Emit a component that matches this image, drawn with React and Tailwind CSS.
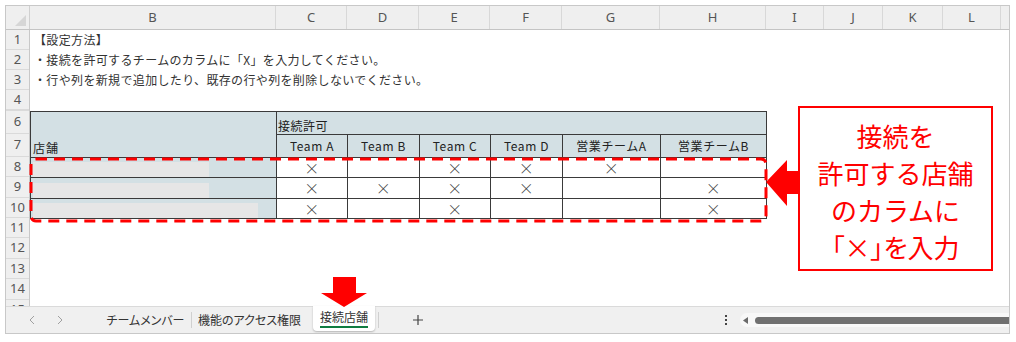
import React from 'react';

const jp = "font-['Noto_Sans_CJK_JP','Noto_Sans',sans-serif]";

const colHeads = [
  { k: 'B', w: 'w-[246px]' },
  { k: 'C', w: 'w-[71px]' },
  { k: 'D', w: 'w-[72px]' },
  { k: 'E', w: 'w-[71px]' },
  { k: 'F', w: 'w-[72px]' },
  { k: 'G', w: 'w-[98px]' },
  { k: 'H', w: 'w-[106px]' },
  { k: 'I', w: 'w-[58px]' },
  { k: 'J', w: 'w-[59px]' },
  { k: 'K', w: 'w-[60px]' },
  { k: 'L', w: 'w-[58px]' },
];

const rowHeads = [
  ['1', 'h-[20px]'], ['2', 'h-[20px]'], ['3', 'h-[20px]'], ['4', 'h-[20px]'], ['', 'h-[1px]'],
  ['6', 'h-[23px]'], ['7', 'h-[23px]'], ['8', 'h-[20px]'], ['9', 'h-[21px]'], ['10', 'h-[20px]'],
  ['11', 'h-[20px]'], ['12', 'h-[21px]'], ['13', 'h-[20px]'], ['14', 'h-[21px]'], ['15', 'h-[20px]'],
];

const teams = ['Team A', 'Team B', 'Team C', 'Team D', '営業チームA', '営業チームB'];

// store rows: mask width + allowed teams
const stores = [
  { mask: 'w-[176px]', h: 'h-[20px]', marks: [1, 0, 1, 1, 1, 0] },
  { mask: 'w-[176px]', h: 'h-[21px]', marks: [1, 1, 1, 1, 0, 1] },
  { mask: 'w-[225px]', h: 'h-[20px]', marks: [1, 0, 1, 0, 0, 1] },
];

const cell = 'border border-[#3a3a3a] p-0';

const PermissionTable = () => (
  <table className={`table-fixed border-collapse w-[736px] ${jp} text-[12px] text-[#222]`}>
    <colgroup>
      <col className="w-[246px]" />
      <col className="w-[71px]" />
      <col className="w-[72px]" />
      <col className="w-[71px]" />
      <col className="w-[72px]" />
      <col className="w-[98px]" />
      <col className="w-[106px]" />
    </colgroup>
    <tbody>
      <tr className="h-[23px] bg-[#d3e0e4]">
        <td rowSpan={2} className={`${cell} align-bottom pl-[2px] pb-[1px] tracking-[1px] leading-[16px]`}>店舗</td>
        <td colSpan={6} className={`${cell} align-bottom pl-[1px] leading-[16px] tracking-[0.5px]`}>接続許可</td>
      </tr>
      <tr className="h-[23px] bg-[#d3e0e4]">
        {teams.map((t) => (
          <td key={t} className={`${cell} text-center leading-[16px] tracking-[0.6px]`}>{t}</td>
        ))}
      </tr>
      {stores.map((s, i) => (
        <tr key={i} className={s.h}>
          <td className={`${cell} bg-[#d3e0e4] align-bottom`}>
            <div className={`ml-[2px] h-[15px] ${s.mask} bg-[#e6e6e6]`} />
          </td>
          {s.marks.map((m, j) => (
            <td key={j} className={`${cell} bg-white text-center text-[15px] leading-[18px] font-light text-[#3c3c3c]`}>
              {m ? '×' : ''}
            </td>
          ))}
        </tr>
      ))}
    </tbody>
  </table>
);

const TabBar = () => (
  <div className={`h-[27px] flex items-center bg-[#f0f0f0] border-t border-[#dadada] ${jp} text-[12px] text-[#333] [font-feature-settings:'palt']`}>
    <svg className="ml-[23px]" width="6" height="10" viewBox="0 0 6 10">
      <polyline points="5,1 1,5 5,9" fill="none" stroke="#a0a0a0" strokeWidth="1" />
    </svg>
    <svg className="ml-[22px]" width="6" height="10" viewBox="0 0 6 10">
      <polyline points="1,1 5,5 1,9" fill="none" stroke="#a0a0a0" strokeWidth="1" />
    </svg>
    <div className="ml-[37px] w-[91px] text-center">チームメンバー</div>
    <div className="w-px h-[16px] bg-[#d0d0d0]" />
    <div className="w-[115px] text-center">機能のアクセス権限</div>
    <div className="ml-[6px] w-[62px] self-start -mt-px h-[25px] bg-white rounded-b-[4px] shadow-[0_1px_2px_rgba(0,0,0,0.25)] flex items-start justify-center pt-[3px]">
      <span className="border-b-2 border-[#107c41] leading-[16px] pb-[1px]">接続店舗</span>
    </div>
    <div className="ml-[3px] w-px h-[16px] bg-[#d0d0d0]" />
    <svg className="ml-[34px]" width="10" height="10" viewBox="0 0 10 10">
      <path d="M5 0 V10 M0 5 H10" stroke="#444" strokeWidth="1.2" />
    </svg>
    <div className="ml-[301px] w-[4px] flex flex-col items-center gap-[2px]">
      <div className="w-[2px] h-[2px] bg-[#444]" />
      <div className="w-[2px] h-[2px] bg-[#444]" />
      <div className="w-[2px] h-[2px] bg-[#444]" />
    </div>
    <div className="ml-[12px] flex-1 h-[14px] bg-[#f8f8f8] rounded-l-full flex items-center">
      <svg className="ml-[3px]" width="5" height="7" viewBox="0 0 5 7">
        <polygon points="5,0 0,3.5 5,7" fill="#6a6a6a" />
      </svg>
      <div className="ml-[7px] flex-1 h-[7px] rounded-l-full bg-[#707070]" />
    </div>
  </div>
);

const App = () => {
  return (
    <div className="relative w-[1016px] h-[342px] bg-white overflow-hidden">
      <div className="ml-[5px] mt-[5px] w-[1005px] h-[329px] border border-[#c8c8c8] flex flex-col overflow-hidden">
        {/* column headers */}
        <div className="h-[24px] flex bg-[#efefef] border-b border-[#c4c4c4] font-['Noto_Sans',sans-serif] text-[13px] text-[#555]">
          <div className="w-[24px] border-r border-[#d0d0d0] flex items-end justify-end p-[3px]">
            <svg width="11" height="11" viewBox="0 0 11 11">
              <polygon points="11,0 11,11 0,11" fill="#d6d6d6" />
            </svg>
          </div>
          {colHeads.map((c) => (
            <div key={c.k} className={`${c.w} border-r border-[#d8d8d8] flex items-center justify-center`}>{c.k}</div>
          ))}
          <div className="flex-1" />
        </div>

        {/* body */}
        <div className="flex-1 flex overflow-hidden">
          <div className="w-[24px] bg-[#efefef] border-r border-[#c8c8c8] flex flex-col font-['Noto_Sans',sans-serif] text-[13px] text-[#555]">
            {rowHeads.map(([n, h], i) => (
              <div key={i} className={`${h} shrink-0 border-b border-[#dadada] flex items-center justify-center overflow-hidden`}>{n}</div>
            ))}
          </div>
          <div className={`flex-1 flex flex-col ${jp} text-[12px] text-[#333] tracking-[0.35px]`}>
            <div className="h-[20px] flex items-center pl-[4px]">【設定方法】</div>
            <div className="h-[20px] flex items-center pl-[4px]">・接続を許可するチームのカラムに「X」を入力してください。</div>
            <div className="h-[20px] flex items-center pl-[4px]">・行や列を新規で追加したり、既存の行や列を削除しないでください。</div>
            <div className="h-[20px]" />
            <div className="h-[1px]" />
            <PermissionTable />
          </div>
        </div>

        <TabBar />
      </div>

      {/* annotations */}
      <svg className="absolute left-[29px] top-[157px]" width="740" height="66" viewBox="0 0 740 66">
        <rect x="2" y="2" width="735" height="62" rx="5" fill="none" stroke="#ff0000" strokeWidth="3" strokeDasharray="11 7" />
      </svg>

      <svg className="absolute left-[764px] top-[158px]" width="36" height="50" viewBox="0 0 36 50">
        <polygon points="2,24 23,2 23,13 36,13 36,36 23,36 23,48" fill="#ff0000" />
      </svg>

      <svg className="absolute left-[319px] top-[275px]" width="50" height="34" viewBox="0 0 50 34">
        <polygon points="14,2 37,2 37,18 48,18 25,32 2,18 14,18" fill="#ff0000" />
      </svg>

      <div className={`absolute left-[798px] top-[106px] w-[195px] h-[165px] border-2 border-[#ff0000] bg-white flex flex-col items-center justify-center pt-[5px] ${jp} text-[26px] leading-[37px] text-[#ff0000]`}>
        <div>接続を</div>
        <div>許可する店舗</div>
        <div>のカラムに</div>
        <div className="[font-feature-settings:'palt']">「×」を入力</div>
      </div>
    </div>
  );
};

export default App;
